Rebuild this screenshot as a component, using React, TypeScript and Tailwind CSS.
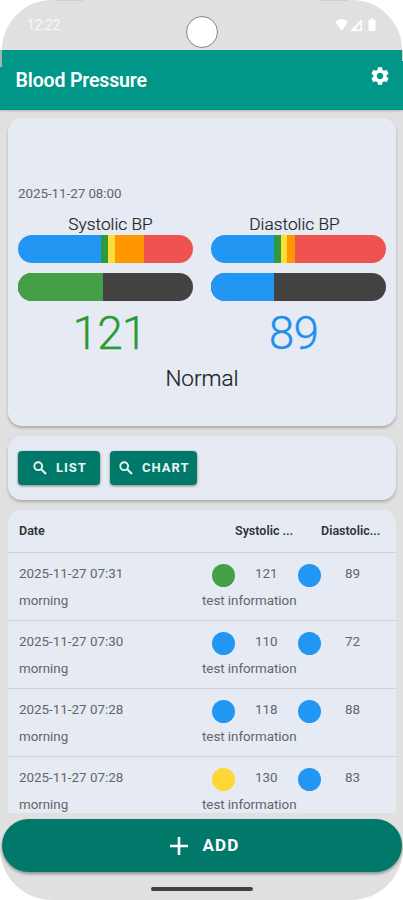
import { clsx } from "clsx";
import { MdSettings } from "react-icons/md";

const readings = [
  { date: "2025-11-27 07:31", systolic: 121, diastolic: 89, color: "bg-[#43a047]" },
  { date: "2025-11-27 07:30", systolic: 110, diastolic: 72, color: "bg-[#2196f3]" },
  { date: "2025-11-27 07:28", systolic: 118, diastolic: 88, color: "bg-[#2196f3]" },
  { date: "2025-11-27 07:28", systolic: 130, diastolic: 83, color: "bg-[#fdd835]" },
];

const gauges = [
  {
    title: "Systolic BP",
    value: 121,
    text: "text-[#2a9a32]",
    fill: "bg-[#43a047]",
    percent: 48.6,
    // blue, green, yellow, orange, red
    zones: [47.6, 4, 4, 16.2, 28.2],
    nudge: "pl-2.5",
  },
  {
    title: "Diastolic BP",
    value: 89,
    text: "text-[#1e8fee]",
    fill: "bg-[#2196f3]",
    percent: 35.8,
    zones: [36, 3.8, 3.8, 4.2, 52.2],
    nudge: "pr-2",
  },
];

const zoneColors = [
  "bg-[#2196f3]",
  "bg-[#2f9a3d]",
  "bg-[#fddd3a]",
  "bg-[#ff9800]",
  "bg-[#ef5350]",
];

function StatusBar() {
  return (
    <div className="flex h-[50px] shrink-0 items-start justify-between rounded-t-[50px] bg-[#e0e0e0] pl-[25px] pr-[25px]">
      <span className="w-20 pt-[15px] text-[14px] leading-5 tracking-[-0.4px] text-[#f8f8f8]">
        12:22
      </span>
      <span className="mt-4 h-8 w-8 rounded-full border border-[#858585] bg-white" />
      <span className="flex w-20 justify-end pt-[18px]">
        <svg width="42" height="14" viewBox="0 0 42 14" fill="#fff">
          <path d="M0.5 4C4-.1 9.500-.1 13 4L6.800 13Z" />
          <path
            fillRule="evenodd"
            d="M15 13L27 1V13ZM21.500 9.200V11.800H25.500V5Z"
          />
          <path d="M33.500 2H35.500V.5H38.500V2H40.500V13H33.500Z" />
        </svg>
      </span>
    </div>
  );
}

function Gauge({ gauge }: { gauge: (typeof gauges)[number] }) {
  return (
    <div className="w-[175px]">
      <p
        className={clsx(
          "h-[21px] text-center text-[17.3px] leading-5 font-light text-[#202226] [-webkit-text-stroke:0.2px]",
          gauge.nudge
        )}
      >
        {gauge.title}
      </p>
      <div className="flex h-7 overflow-hidden rounded-full">
        {gauge.zones.map((z, i) => (
          <div key={i} className={zoneColors[i]} style={{ width: `${z}%` }} />
        ))}
      </div>
      <div className="mt-2.5 h-7 overflow-hidden rounded-full bg-[#424242]">
        <div
          className={clsx("h-full", gauge.fill)}
          style={{ width: `${gauge.percent}%` }}
        />
      </div>
      <p
        className={clsx(
          "mt-[3px] h-[60px] text-center text-[46px] leading-[58px] font-light tracking-[-0.8px] [-webkit-text-stroke:0.3px]",
          gauge.text,
          gauge.value > 99 ? "pl-2" : "pr-2.5"
        )}
      >
        {gauge.value}
      </p>
    </div>
  );
}

function SearchButton({ label, className }: { label: string; className: string }) {
  return (
    <button
      className={clsx(
        "flex h-[34px] items-center gap-[9px] rounded-[4px] bg-[#00796b] text-[13px] font-bold tracking-[1px] text-[#e9f6f3] shadow-[0_1px_3px_rgba(0,0,0,0.45)]",
        className
      )}
    >
      <svg
        width="14"
        height="14"
        viewBox="0 0 14 14"
        fill="none"
        stroke="currentColor"
        strokeWidth="1.9"
      >
        <circle cx="5.2" cy="5.2" r="3.9" />
        <path d="M8 8L13 13" strokeWidth="2.1" />
      </svg>
      <span>{label}</span>
    </button>
  );
}

function ReadingRow({ reading }: { reading: (typeof readings)[number] }) {
  return (
    <div className="h-[68px] shrink-0 border-t border-[#cdd2da] pl-[11px] text-[13.4px] text-[#62656b]">
      <div className="flex h-[34px] items-center pt-[11px]">
        <span className="w-[193px] pb-[2px]">{reading.date}</span>
        <span className={clsx("h-[23px] w-[23px] rounded-full", reading.color)} />
        <span className="w-[63px] pb-[2px] pl-5">{reading.systolic}</span>
        <span className="h-[23px] w-[23px] rounded-full bg-[#2196f3]" />
        <span className="pb-[2px] pl-6">{reading.diastolic}</span>
      </div>
      <div className="flex pt-1 leading-5 tracking-[-0.05px]">
        <span className="w-[183px]">morning</span>
        <span>test information</span>
      </div>
    </div>
  );
}

export default function App() {
  return (
    <div className="relative flex h-[900px] w-[403px] flex-col overflow-hidden bg-white font-['Roboto',sans-serif]">
      <div className="pl-[2px] pr-px">
        <StatusBar />
      </div>
      <div className="flex min-h-0 flex-1 flex-col overflow-hidden rounded-b-[52px] bg-[#e0e0e0]">
        <header className="flex h-[60px] shrink-0 items-center justify-between bg-[#009688] pl-[15.5px] pr-[12px] text-white shadow-[0_1px_2px_rgba(0,0,0,0.2)]">
          <h1 className="pt-[2px] text-[19.5px] font-semibold tracking-[-0.15px]">Blood Pressure</h1>
          <MdSettings size={22} className="mb-2" />
        </header>

        <main className="flex min-h-0 flex-1 flex-col pt-2 pr-[7px] pl-2">
          <section className="h-[308px] shrink-0 rounded-[14px] bg-[#e6ebf3] px-[10px] pt-[66px] shadow-[0_2px_3px_rgba(0,0,0,0.24)]">
            <p className="h-[30px] text-[13.4px] leading-5 tracking-[-0.05px] text-[#62656b]">
              2025-11-27 08:00
            </p>
            <div className="flex justify-between">
              {gauges.map((g) => (
                <Gauge key={g.title} gauge={g} />
              ))}
            </div>
            <p className="text-center text-[22.5px] leading-7 font-light text-[#202226] [-webkit-text-stroke:0.2px]">
              Normal
            </p>
          </section>

          <section className="mt-2.5 flex h-16 shrink-0 gap-[10px] rounded-[14px] bg-[#e6ebf3] px-[10px] pt-[15px] shadow-[0_2px_3px_rgba(0,0,0,0.24)]">
            <SearchButton label="LIST" className="w-[82px] pl-[15px]" />
            <SearchButton label="CHART" className="w-[87px] pl-[9px]" />
          </section>

          <section className="mt-2.5 flex h-[303px] shrink-0 flex-col overflow-hidden rounded-t-[14px] bg-[#e6ebf3]">
            <div className="flex h-[42px] shrink-0 items-center pl-[11px] text-[12.5px] font-semibold text-[#303238]">
              <span className="w-[216px]">Date</span>
              <span className="w-[86px]">Systolic ...</span>
              <span>Diastolic...</span>
            </div>
            {readings.map((r, i) => (
              <ReadingRow key={i} reading={r} />
            ))}
          </section>
        </main>
      </div>

      {/* the add bar reaches past the rounded screen corners */}
      <button className="absolute top-[819px] left-[2px] flex h-[53px] w-[400px] items-center justify-center gap-[14px] rounded-[27px] bg-[#00796b] pt-px pl-[6px] text-[17px] font-bold tracking-[1.2px] text-white shadow-[0_2px_3px_rgba(0,0,0,0.35)]">
        <svg width="18" height="18" viewBox="0 0 18 18" stroke="currentColor" strokeWidth="2.6">
          <path d="M9 0V18M0 9H18" />
        </svg>
        <span>ADD</span>
      </button>
      <div className="absolute top-[887px] left-[151px] h-1 w-[102px] rounded-full bg-[#424242]" />
      {/* side edges of the case */}
      <div className="absolute top-[50px] left-0 h-[17px] w-[2px] bg-[#9fb5b2]" />
      <div className="absolute top-[50px] right-0 h-[11px] w-px bg-[#c8d4d2]" />
      <div className="absolute top-0 left-[55px] h-px w-7 rounded-full bg-[#cfcfcf]" />
      <div className="absolute top-0 right-[55px] h-px w-7 rounded-full bg-[#cfcfcf]" />
    </div>
  );
}
